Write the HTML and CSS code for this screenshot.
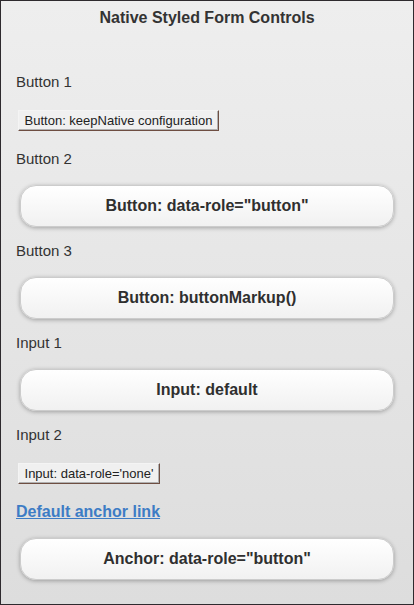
FILE: index.html
```html
<!DOCTYPE html>
<html>
<head>
<meta charset="utf-8">
<link rel="stylesheet" href="styles.css">
</head>
<body>
<div class="page">
  <header class="header"><h1 class="title">Native Styled Form Controls</h1></header>
  <main class="content">
    <div class="label">Button 1</div>
    <button class="native native-btn">Button: keepNative configuration</button>
    <div class="label">Button 2</div>
    <div class="jbtn">Button: data-role="button"</div>
    <div class="label">Button 3</div>
    <div class="jbtn">Button: buttonMarkup()</div>
    <div class="label">Input 1</div>
    <div class="jbtn">Input: default</div>
    <div class="label">Input 2</div>
    <button class="native native-input">Input: data-role='none'</button>
    <a class="link" href="#">Default anchor link</a>
    <div class="jbtn">Anchor: data-role="button"</div>
  </main>
</div>
</body>
</html>
```
FILE: styles.css
```css
html, body {
  margin: 0;
  padding: 0;
}
body {
  font-family: "Liberation Sans", Arial, sans-serif;
  color: #333;
}
.page {
  box-sizing: border-box;
  width: 414px;
  height: 605px;
  border: 1px solid #2e2a2e;
  background: linear-gradient(#eeeeee, #dddddd);
  overflow: hidden;
}
.header {
  padding: 7px 0 8px;
}
.title {
  margin: 0;
  font-size: 16px;
  line-height: 20px;
  font-weight: bold;
  text-align: center;
  color: #333;
}
.content {
  display: flex;
  flex-direction: column;
  align-items: flex-start;
  padding: 36px 15px 0;
}
.label {
  font-size: 15px;
  line-height: 20px;
  color: #333;
}
.native {
  box-sizing: border-box;
  margin: 18px 0 18px 2px;
  height: 21px;
  padding: 0;
  white-space: nowrap;
  font-family: "Liberation Sans", Arial, sans-serif;
  font-size: 13px;
  color: #222;
  background: #f0f0f0;
  border: 1px solid;
  border-color: #f4f4f4 #6e4e42 #6e4e42 #f4f4f4;
  box-shadow: inset -1px -1px 0 #b0b0b0;
  border-radius: 0;
}
.native-btn {
  width: 201px;
}
.native-input {
  width: 142px;
}
.jbtn {
  align-self: stretch;
  box-sizing: border-box;
  margin: 16px 4px 14px;
  height: 42px;
  display: flex;
  align-items: center;
  justify-content: center;
  font-size: 16px;
  font-weight: bold;
  color: #2f2f2f;
  border: 1px solid #cccccc;
  border-radius: 16px;
  background: linear-gradient(#ffffff, #f1f1f1);
  box-shadow: 0 1px 4px rgba(0, 0, 0, 0.3);
}
.link {
  font-size: 16px;
  line-height: 20px;
  font-weight: bold;
  color: #3d7cc5;
  text-decoration: underline;
}
```
